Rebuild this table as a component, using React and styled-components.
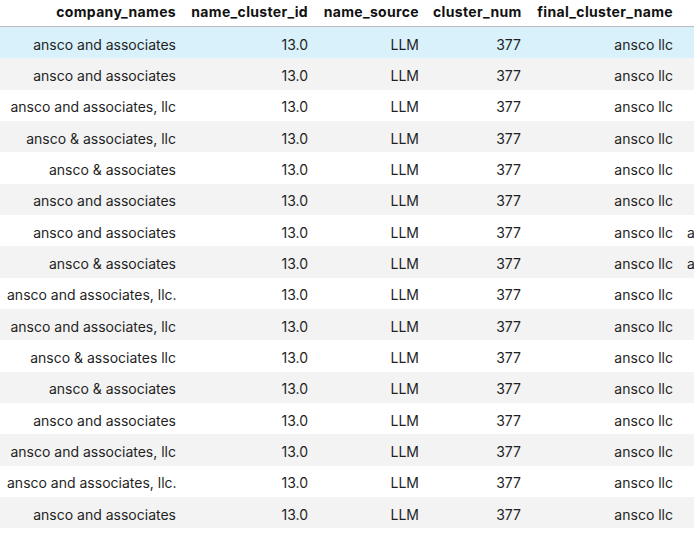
import React from "react";
import styled, { createGlobalStyle } from "styled-components";

const Global = createGlobalStyle`
  html, body { margin: 0; padding: 0; background: #fff; overflow: hidden; }
  body { font-family: Inter, "Liberation Sans", sans-serif; }
`;

const COLS = "183px 132px 111px 102px 152px 1fr";

const Table = styled.div`
  width: 694px;
  display: flex;
  flex-direction: column;
  color: #1f1f1f;
  font-size: 14px;
`;

const Row = styled.div`
  display: grid;
  grid-template-columns: ${COLS};
  height: ${(p) => (p.$head ? "27px" : "31.33px")};
  align-items: center;
  background: ${(p) => (p.$hover ? "#d9f1fb" : p.$odd ? "#f3f3f3" : "#ffffff")};
  border-bottom: ${(p) => (p.$head ? "1px solid #bdbdbd" : "none")};
  box-sizing: border-box;
`;

const Cell = styled.div`
  text-align: ${(p) => (p.$left ? "left" : "right")};
  padding: ${(p) => (p.$head ? "0 7px 3px" : "3px 7px 0")};
  white-space: nowrap;
  overflow: hidden;
  font-weight: ${(p) => (p.$head ? 700 : 400)};
  letter-spacing: ${(p) => (p.$head ? "0.33px" : "0")};
  color: ${(p) => (p.$head ? "#111" : "#1f1f1f")};
`;

const names = [
  "ansco and associates",
  "ansco and associates",
  "ansco and associates, llc",
  "ansco & associates, llc",
  "ansco & associates",
  "ansco and associates",
  "ansco and associates",
  "ansco & associates",
  "ansco and associates, llc.",
  "ansco and associates, llc",
  "ansco & associates llc",
  "ansco & associates",
  "ansco and associates",
  "ansco and associates, llc",
  "ansco and associates, llc.",
  "ansco and associates",
];

const extra = { 6: "a", 7: "a" };

export default function App() {
  return (
    <>
      <Global />
      <Table>
        <Row $head>
          <Cell $head>company_names</Cell>
          <Cell $head>name_cluster_id</Cell>
          <Cell $head>name_source</Cell>
          <Cell $head>cluster_num</Cell>
          <Cell $head>final_cluster_name</Cell>
          <Cell $head $left></Cell>
        </Row>
        {names.map((n, i) => (
          <Row key={i} $hover={i === 0} $odd={i % 2 === 1}>
            <Cell>{n}</Cell>
            <Cell>13.0</Cell>
            <Cell>LLM</Cell>
            <Cell>377</Cell>
            <Cell>ansco llc</Cell>
            <Cell $left>{extra[i] || ""}</Cell>
          </Row>
        ))}
      </Table>
    </>
  );
}
